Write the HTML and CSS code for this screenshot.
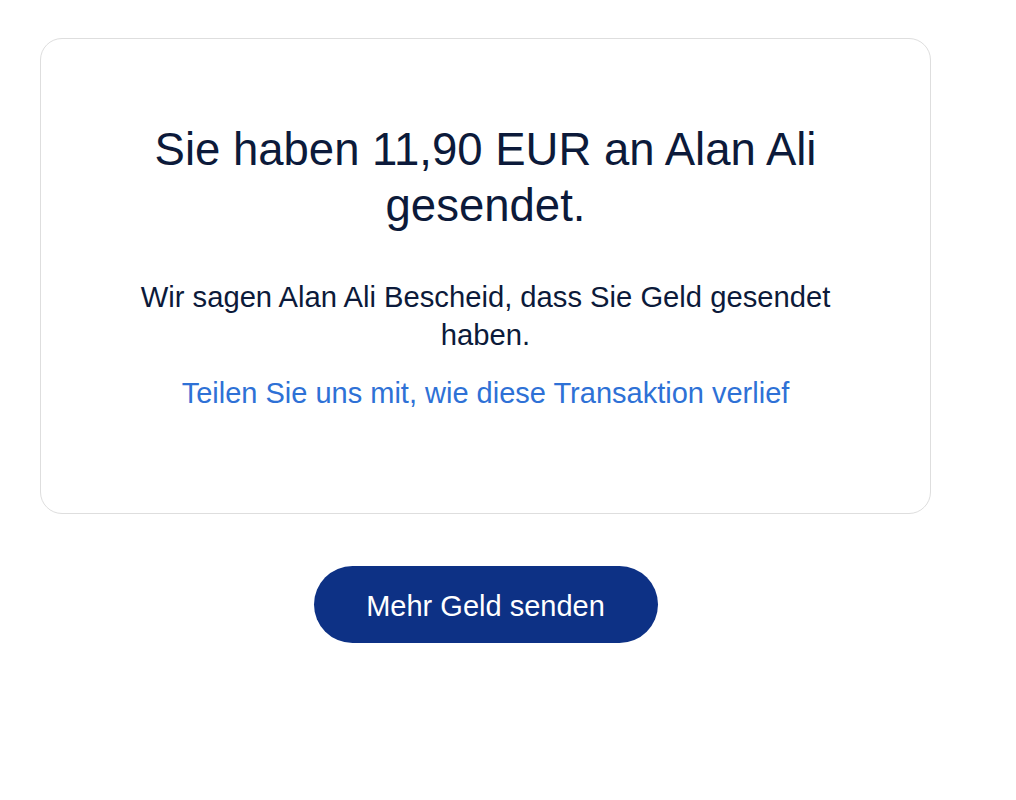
FILE: index.html
```html
<!DOCTYPE html>
<html lang="de">
<head>
<meta charset="utf-8">
<title>Geld gesendet</title>
<link rel="stylesheet" href="styles.css">
</head>
<body>
<main class="page">
  <section class="card">
    <h1 class="title">Sie haben 11,90 EUR an Alan Ali gesendet.</h1>
    <p class="message">Wir sagen Alan Ali Bescheid, dass Sie Geld gesendet haben.</p>
    <a class="feedback" href="#">Teilen Sie uns mit, wie diese Transaktion verlief</a>
  </section>
  <div class="actions">
    <button class="primary" type="button">Mehr Geld senden</button>
  </div>
</main>
</body>
</html>
```

FILE: styles.css
```css
html, body {
  margin: 0;
  padding: 0;
  background: #ffffff;
}
body {
  font-family: "Liberation Sans", Arial, Helvetica, sans-serif;
  color: #0c1a3a;
}
.page {
  width: 891px;
  padding: 38px 0 0 40px;
}
.card {
  box-sizing: border-box;
  height: 476px;
  border: 1px solid #dedede;
  border-radius: 22px;
  padding: 83px 88px 0;
  display: flex;
  flex-direction: column;
  align-items: center;
  text-align: center;
}
.title {
  margin: 0;
  font-size: 45.5px;
  font-weight: 400;
  line-height: 56px;
  color: #0c1a3a;
}
.message {
  margin: 44px 0 0;
  font-size: 29.2px;
  line-height: 38px;
  color: #0c1a3a;
}
.feedback {
  margin-top: 20px;
  font-size: 29px;
  line-height: 38px;
  color: #2e71d6;
  text-decoration: none;
}
.actions {
  display: flex;
  justify-content: center;
  padding-top: 52px;
}
.primary {
  width: 344px;
  height: 77px;
  padding: 3px 0 0;
  border: none;
  border-radius: 39px;
  background: #0d3185;
  color: #ffffff;
  font-family: "Liberation Sans", Arial, Helvetica, sans-serif;
  font-size: 29px;
  cursor: pointer;
}
```
